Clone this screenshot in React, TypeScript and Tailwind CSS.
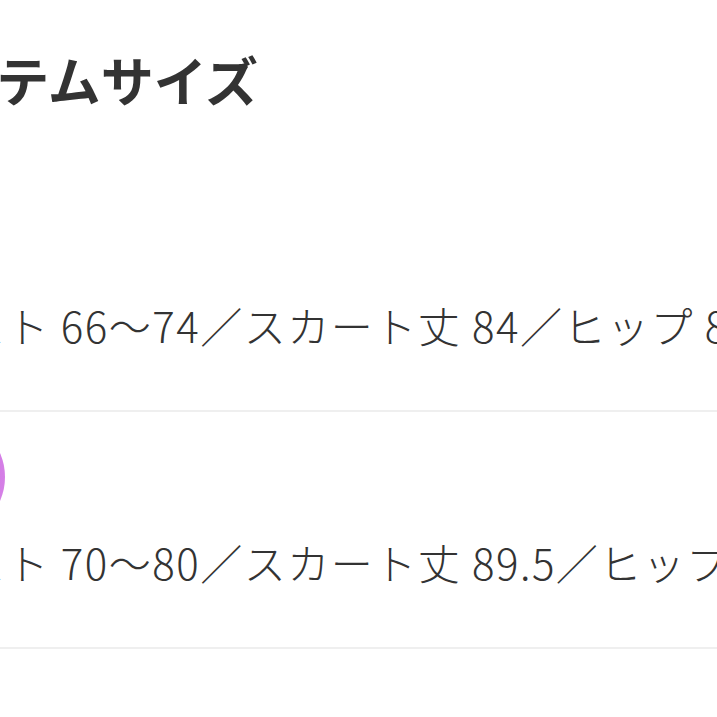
const sizes = [
  { swatch: 'bg-white', text: 'ウエスト 66〜74／スカート丈 84／ヒップ 88〜96' },
  { swatch: 'bg-[radial-gradient(circle_at_40%_45%,#c95fdc,#d98bea)]', text: 'ウエスト 70〜80／スカート丈 89.5／ヒップ 92〜100' },
]

const App = () => (
  <div
    className="w-[717px] h-[717px] overflow-hidden bg-white text-[#333]"
    style={{ fontFamily: "'Noto Sans CJK JP', 'Noto Sans', sans-serif" }}
  >
    <div className="-ml-[106px] w-[1500px]">
      <h2 className="pt-[45px] mb-[62px] text-[53px] leading-[68px] font-bold whitespace-nowrap">アイテムサイズ</h2>
      {sizes.map((s, i) => (
        <div key={i} className="pt-[7px] pb-[57px] border-b-2 border-[#efefef]">
          <div className="h-[115px] flex items-center">
            <div className={`shrink-0 w-[120px] h-[120px] -ml-[9px] rounded-full ${s.swatch}`} />
          </div>
          <p className="-ml-[18px] text-[42px] leading-[56px] font-light tracking-[1.5px] whitespace-nowrap">{s.text}</p>
        </div>
      ))}
      <div className="mt-[68px] border-t-2 border-[#efefef] h-4" />
    </div>
  </div>
)

export default App
